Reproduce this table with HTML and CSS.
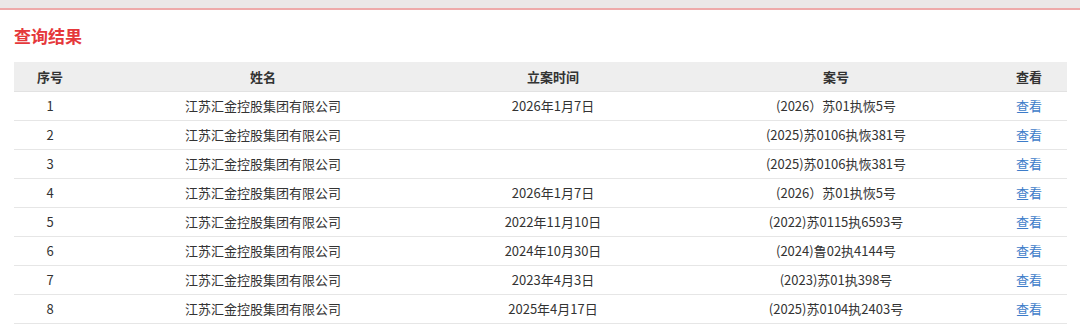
FILE: index.html
```html
<!DOCTYPE html>
<html lang="zh">
<head>
<meta charset="utf-8">
<title>查询结果</title>
<link rel="stylesheet" href="styles.css">
</head>
<body>
<div class="topbar"></div>
<div class="content">
  <h2 class="title">查询结果</h2>
  <table class="result">
    <colgroup>
      <col class="c1"><col class="c2"><col class="c3"><col class="c4"><col class="c5">
    </colgroup>
    <thead>
      <tr><th>序号</th><th>姓名</th><th>立案时间</th><th>案号</th><th class="last">查看</th></tr>
    </thead>
    <tbody>
      <tr><td>1</td><td>江苏汇金控股集团有限公司</td><td>2026年1月7日</td><td>(2026）苏01执恢5号</td><td class="last"><a href="#">查看</a></td></tr>
      <tr><td>2</td><td>江苏汇金控股集团有限公司</td><td></td><td>(2025)苏0106执恢381号</td><td class="last"><a href="#">查看</a></td></tr>
      <tr><td>3</td><td>江苏汇金控股集团有限公司</td><td></td><td>(2025)苏0106执恢381号</td><td class="last"><a href="#">查看</a></td></tr>
      <tr><td>4</td><td>江苏汇金控股集团有限公司</td><td>2026年1月7日</td><td>(2026）苏01执恢5号</td><td class="last"><a href="#">查看</a></td></tr>
      <tr><td>5</td><td>江苏汇金控股集团有限公司</td><td>2022年11月10日</td><td>(2022)苏0115执6593号</td><td class="last"><a href="#">查看</a></td></tr>
      <tr><td>6</td><td>江苏汇金控股集团有限公司</td><td>2024年10月30日</td><td>(2024)鲁02执4144号</td><td class="last"><a href="#">查看</a></td></tr>
      <tr><td>7</td><td>江苏汇金控股集团有限公司</td><td>2023年4月3日</td><td>(2023)苏01执398号</td><td class="last"><a href="#">查看</a></td></tr>
      <tr><td>8</td><td>江苏汇金控股集团有限公司</td><td>2025年4月17日</td><td>(2025)苏0104执2403号</td><td class="last"><a href="#">查看</a></td></tr>
    </tbody>
  </table>
</div>
</body>
</html>
```
FILE: styles.css
```css
html, body {
  margin: 0;
  padding: 0;
  background: #fff;
  font-family: "Noto Sans CJK SC", "Liberation Sans", sans-serif;
  color: #333;
}
.topbar {
  height: 8px;
  background: #ebe8e8;
  border-bottom: 2px solid #eeaaaa;
}
.content {
  padding: 0 13px 0 14px;
}
.title {
  margin: 0;
  padding-top: 14px;
  height: 38px;
  font-size: 17px;
  line-height: 24px;
  font-weight: bold;
  color: #e5383b;
}
.result {
  width: 1053px;
  border-collapse: collapse;
  table-layout: fixed;
  font-size: 13px;
}
.c1 { width: 72px; }
.c2 { width: 354px; }
.c3 { width: 226px; }
.c4 { width: 340px; }
.c5 { width: 61px; }
.result th {
  background: #eeeeee;
  height: 28px;
  padding: 0 0 1px;
  font-weight: bold;
  color: #333;
  text-align: center;
  border-bottom: 1px solid #e2e2e2;
}
.result td {
  height: 26px;
  padding: 0 0 2px;
  text-align: center;
  color: #333;
  border-bottom: 1px solid #e6e6e6;
}
.result .last {
  padding-right: 15px;
}
.result a {
  color: #3d7cc9;
  text-decoration: none;
}
```
